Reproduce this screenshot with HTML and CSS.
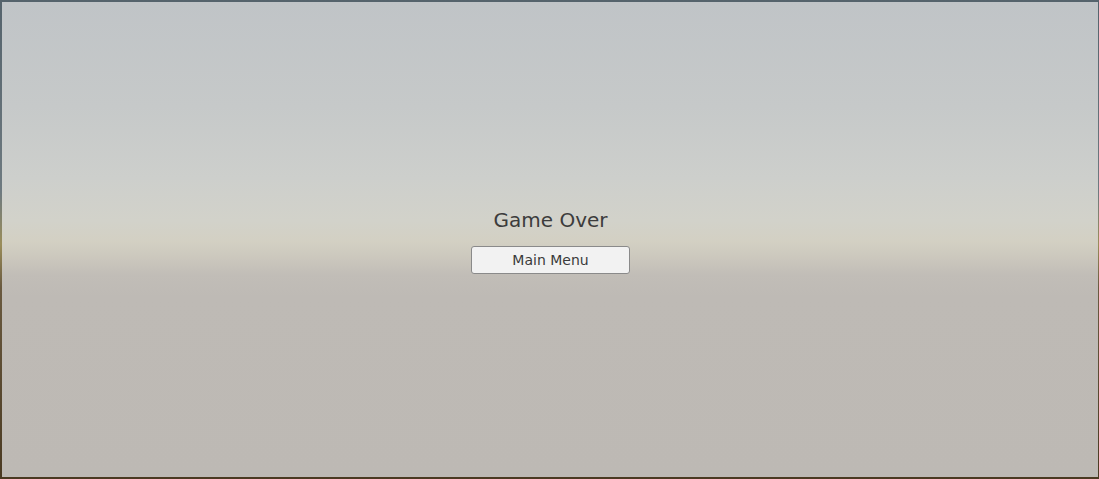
FILE: index.html
```html
<!DOCTYPE html>
<html>
<head>
<meta charset="utf-8">
<link rel="stylesheet" href="styles.css">
</head>
<body>
<div class="frame">
  <div class="sky">
    <div class="panel">
      <div class="title">Game Over</div>
      <button class="btn">Main Menu</button>
    </div>
  </div>
</div>
</body>
</html>
```
FILE: styles.css
```css
html, body {
  margin: 0;
  padding: 0;
  width: 1099px;
  height: 479px;
  overflow: hidden;
}
.frame {
  width: 1099px;
  height: 479px;
  box-sizing: border-box;
  padding: 2px 1px 2px 2px;
  background: linear-gradient(to bottom, #55636c 0%, #6e7a80 40%, #9a8d5a 51%, #6a5a40 60%, #4a3a22 100%);
}
.sky {
  width: 100%;
  height: 100%;
  display: flex;
  align-items: center;
  justify-content: center;
  background: linear-gradient(to bottom,
    #c0c4c7 0%,
    #c6c9c9 22%,
    #cdcfcc 37%,
    #d2d2ca 46%,
    #d3d0c3 50.5%,
    #cbc7bd 54%,
    #c1bdb7 57.5%,
    #bebab5 62%,
    #bdb9b4 100%);
}
.panel {
  display: flex;
  flex-direction: column;
  align-items: center;
  gap: 14px;
  margin-left: 1px;
  margin-top: 2px;
}
.title {
  font-family: "DejaVu Sans", sans-serif;
  font-size: 20px;
  color: #3c3c3c;
  line-height: 24px;
}
.btn {
  width: 159px;
  height: 28px;
  box-sizing: border-box;
  border: 1px solid #8a8a8a;
  border-radius: 3px;
  background: #f2f2f2;
  font-family: "DejaVu Sans", sans-serif;
  font-size: 14px;
  color: #3a3a3a;
  padding: 0;
}
```
